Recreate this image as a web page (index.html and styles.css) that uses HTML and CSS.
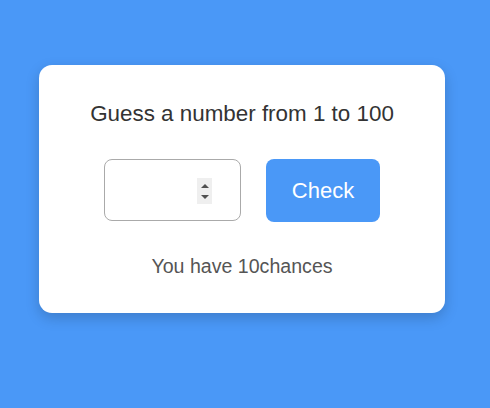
FILE: index.html
```html
<!DOCTYPE html>
<html>
<head>
<meta charset="utf-8">
<link rel="stylesheet" href="styles.css">
</head>
<body>
<div class="card">
  <p class="title">Guess a number from 1 to 100</p>
  <div class="controls">
    <span class="field">
      <input class="guess" type="number">
      <span class="spin"><i class="up"></i><i class="down"></i></span>
    </span>
    <button class="check">Check</button>
  </div>
  <p class="chances">You have 10chances</p>
</div>
</body>
</html>
```
FILE: styles.css
```css
html, body {
  margin: 0;
  height: 100%;
}
body {
  background: #4a98f7;
  font-family: "Liberation Sans", Arial, sans-serif;
  box-sizing: border-box;
  padding: 65px 0 0 39px;
}
.card {
  box-sizing: border-box;
  width: 406px;
  height: 248px;
  background: #fff;
  border-radius: 13px;
  box-shadow: 0 5px 14px rgba(0, 0, 0, 0.18);
  padding-top: 36px;
  display: flex;
  flex-direction: column;
  align-items: center;
}
.title {
  margin: 0;
  font-size: 22.4px;
  color: #333;
}
.controls {
  margin-top: 32px;
  display: flex;
  gap: 25px;
}
.field {
  position: relative;
  display: block;
  width: 137px;
  height: 62px;
}
.guess {
  box-sizing: border-box;
  width: 137px;
  height: 62px;
  border: 1px solid #aaa;
  border-radius: 8px;
  padding: 18px 25px 17px 10px;
  font-size: 22px;
  font-family: inherit;
  outline: none;
  -moz-appearance: textfield;
}
.guess::-webkit-inner-spin-button,
.guess::-webkit-outer-spin-button {
  -webkit-appearance: none;
  margin: 0;
}
.spin {
  position: absolute;
  top: 19px;
  right: 29px;
  width: 15px;
  height: 26px;
  background: #efefef;
  box-sizing: border-box;
  padding-top: 6px;
  display: flex;
  flex-direction: column;
  align-items: center;
  gap: 7px;
}
.spin i {
  display: block;
  width: 0;
  height: 0;
  border-left: 4px solid transparent;
  border-right: 4px solid transparent;
}
.spin .up {
  border-bottom: 4px solid #505050;
}
.spin .down {
  border-top: 4px solid #505050;
}
.check {
  box-sizing: border-box;
  width: 114px;
  height: 63px;
  border: none;
  border-radius: 8px;
  background: #4a98f7;
  color: #fff;
  font-size: 22px;
  font-family: inherit;
  cursor: pointer;
}
.chances {
  margin: 33px 0 0;
  font-size: 19.6px;
  color: #555;
}
```
